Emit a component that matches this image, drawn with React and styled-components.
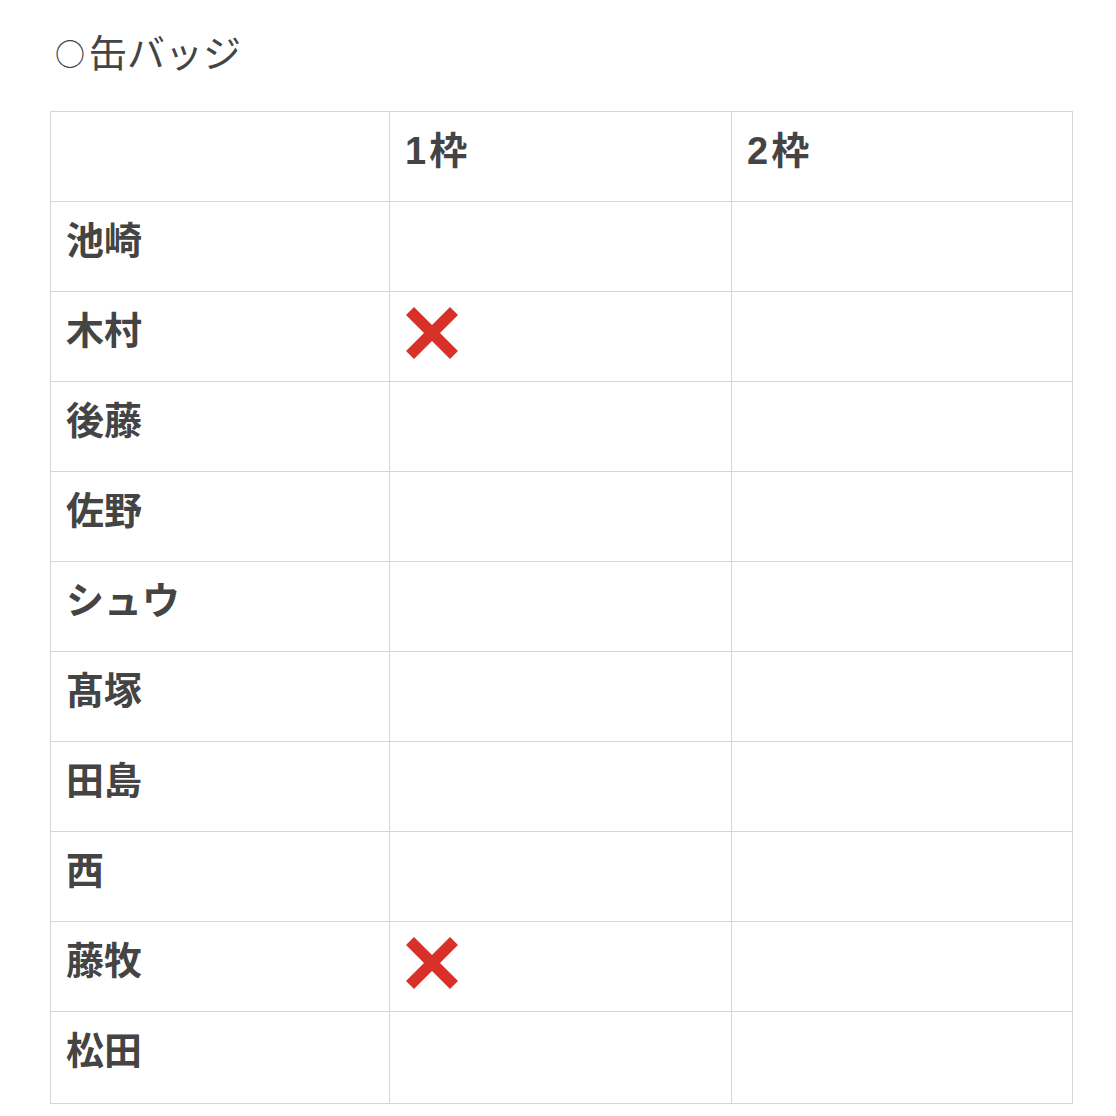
import React from 'react';
import styled, { createGlobalStyle } from 'styled-components';

const GlobalStyle = createGlobalStyle`
    body {
        margin: 0;
        background: #fff;
        font-family: "Liberation Sans", "Noto Sans CJK JP", sans-serif;
        color: #444;
    }
`;

const rows = [
    { name: '池崎', marks: [false, false] },
    { name: '木村', marks: [true, false] },
    { name: '後藤', marks: [false, false] },
    { name: '佐野', marks: [false, false] },
    { name: 'シュウ', marks: [false, false] },
    { name: '髙塚', marks: [false, false] },
    { name: '田島', marks: [false, false] },
    { name: '西', marks: [false, false] },
    { name: '藤牧', marks: [true, false] },
    { name: '松田', marks: [false, false] },
];

const CrossMark = () => (
    <CrossSvg viewBox="0 0 54 54" aria-label="×">
        <path d="M1 9 L9 1 L27 19 L45 1 L53 9 L35 27 L53 45 L45 53 L27 35 L9 53 L1 45 L19 27 Z" fill="#d8312a" />
    </CrossSvg>
);

const App = () => (
    <Root>
        <GlobalStyle />
        <Title><Circle>○</Circle>缶バッジ</Title>
        <Table>
            <colgroup>
                <col style={{ width: '339px' }} />
                <col style={{ width: '342px' }} />
                <col style={{ width: '341px' }} />
            </colgroup>
            <thead>
                <tr>
                    <Cell />
                    <Cell $spaced>1枠</Cell>
                    <Cell $spaced>2枠</Cell>
                </tr>
            </thead>
            <tbody>
                {rows.map((row, idx) => (
                    <tr key={row.name}>
                        <Cell $last={idx === rows.length - 1}>{row.name}</Cell>
                        {row.marks.map((m, i) => (
                            <Cell key={i} $last={idx === rows.length - 1}>{m ? <CrossMark /> : null}</Cell>
                        ))}
                    </tr>
                ))}
            </tbody>
        </Table>
    </Root>
);

const Root = styled.div`
    padding: 24px 0 0 50px;
`;

const Title = styled.h2`
    margin: 0 0 32px 5px;
    font-family: "Noto Sans CJK JP", sans-serif;
    font-size: 38px;
    font-weight: 400;
    line-height: 54px;
    color: #444;
`;

const Circle = styled.span`
    font-size: 30px;
    margin-right: 4px;
    vertical-align: 2px;
`;

const Table = styled.table`
    border-collapse: collapse;
    table-layout: fixed;
    width: 1023px;
`;

const Cell = styled.td`
    height: ${(p) => (p.$last ? '92px' : '90px')};
    box-sizing: border-box;
    padding: 10px 14px 0 15px;
    vertical-align: top;
    border: 1px solid #d6d6d6;
    font-size: 38px;
    font-weight: 700;
    line-height: 58px;
    letter-spacing: ${(p) => (p.$spaced ? '3px' : '0')};
    color: #444;
`;

const CrossSvg = styled.svg`
    width: 54px;
    height: 54px;
    margin-top: 4px;
    display: block;
`;

export default App;
